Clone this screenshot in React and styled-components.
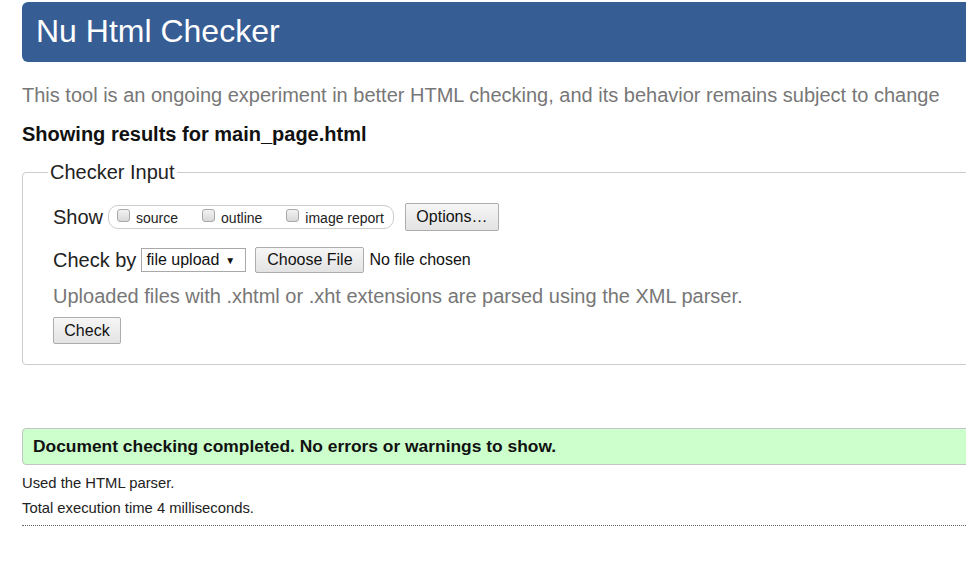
import React from "react";
import styled, { createGlobalStyle } from "styled-components";

const GlobalStyle = createGlobalStyle`
  html, body {
    margin: 0;
    padding: 0;
    background: #fff;
    overflow: hidden;
  }
  body {
    font-family: "Liberation Sans", Arial, sans-serif;
    color: #111;
  }
`;

const App = () => {
  return (
    <Page>
      <GlobalStyle />
      <Header>
        <h1>Nu Html Checker</h1>
      </Header>
      <Lead>
        This tool is an ongoing experiment in better HTML checking, and its
        behavior remains subject to change
      </Lead>
      <Results>Showing results for main_page.html</Results>

      <InputSet>
        <legend>Checker Input</legend>
        <Row>
          <RowLabel>Show</RowLabel>
          <ShowGroup>
            <CheckItem>
              <Box type="checkbox" />
              source
            </CheckItem>
            <CheckItem>
              <Box type="checkbox" />
              outline
            </CheckItem>
            <CheckItem>
              <Box type="checkbox" />
              image report
            </CheckItem>
          </ShowGroup>
          <Button $w={94} $h={28}>Options…</Button>
        </Row>
        <Row $mt={15}>
          <RowLabel>Check by</RowLabel>
          <Select>
            file upload <span className="arrow">▼</span>
          </Select>
          <Button $w={109} $h={26}>Choose File</Button>
          <FileName>No file chosen</FileName>
        </Row>
        <Hint>
          Uploaded files with .xhtml or .xht extensions are parsed using the XML
          parser.
        </Hint>
        <Button $w={68} $h={27}>Check</Button>
      </InputSet>

      <Success>Document checking completed. No errors or warnings to show.</Success>
      <Note $mt={8}>Used the HTML parser.</Note>
      <Note $mt={5}>Total execution time 4 milliseconds.</Note>
      <Rule />
    </Page>
  );
};
export default App;

const Page = styled.main`
  width: 1010px;
  padding: 2px 0 0 22px;
`;

const Header = styled.header`
  height: 60px;
  background: #375d95;
  border-radius: 6px;
  display: flex;
  align-items: center;

  h1 {
    margin: 0 0 0 14px;
    color: #fff;
    font-size: 32px;
    font-weight: normal;
    line-height: 1;
    padding-bottom: 2px;
  }
`;

const Lead = styled.p`
  margin: 21px 0 0;
  font-size: 20px;
  line-height: 24px;
  color: #777;
  white-space: nowrap;
`;

const Results = styled.h2`
  margin: 15px 0 0;
  font-size: 20px;
  line-height: 24px;
  font-weight: bold;
  color: #111;
`;

const InputSet = styled.fieldset`
  margin: 14px 0 0;
  padding: 0 0 20px 30px;
  border: 1px solid #ccc;
  border-radius: 4px;

  legend {
    margin-left: -5px;
    padding: 0 2px;
    font-size: 20px;
    line-height: 24px;
    color: #222;
  }
`;

const Row = styled.div`
  display: flex;
  align-items: center;
  height: 28px;
  margin-top: ${props => (props.$mt ? props.$mt : 19)}px;
`;

const RowLabel = styled.span`
  font-size: 20px;
  color: #222;
  margin-right: 5px;
`;

const ShowGroup = styled.div`
  display: flex;
  align-items: center;
  height: 22px;
  padding: 0 9px 0 7px;
  border: 1px solid #ccc;
  border-radius: 10px;
  margin-right: 11px;
`;

const CheckItem = styled.label`
  display: flex;
  align-items: center;
  font-size: 14px;
  color: #222;
  padding-top: 1px;

  & + & {
    margin-left: 23px;
  }
`;

const Box = styled.input`
  appearance: none;
  width: 13px;
  height: 13px;
  margin: -5px 6px 0 1px;
  border: 1px solid #a8a8a8;
  border-radius: 3px;
  background: linear-gradient(#f2f2f2, #d8d8d8);
`;

const Button = styled.button`
  box-sizing: border-box;
  width: ${props => props.$w}px;
  height: ${props => props.$h}px;
  padding: 0;
  font-family: "Liberation Sans", Arial, sans-serif;
  font-size: 16px;
  color: #111;
  background: linear-gradient(#f6f6f6, #e3e3e3);
  border: 1px solid #adadad;
  border-radius: 2px;
`;

const Select = styled.div`
  box-sizing: border-box;
  display: flex;
  align-items: center;
  height: 24px;
  width: 105px;
  padding: 0 0 0 4px;
  margin-right: 9px;
  font-size: 16px;
  color: #111;
  border: 1px solid #a9a9a9;
  background: #fff;

  .arrow {
    font-size: 10px;
    margin-left: 6px;
  }
`;

const FileName = styled.span`
  margin-left: 5px;
  font-size: 16px;
  color: #111;
`;

const Hint = styled.p`
  margin: 11px 0 10px;
  font-size: 20px;
  line-height: 22px;
  color: #777;
`;

const Success = styled.div`
  box-sizing: border-box;
  margin-top: 63px;
  height: 37px;
  display: flex;
  align-items: center;
  padding-left: 10px;
  background: #ccffcc;
  border: 1px solid #c4c4c4;
  border-radius: 4px;
  font-size: 17.4px;
  font-weight: bold;
  color: #111;
`;

const Note = styled.p`
  margin: ${props => props.$mt}px 0 0;
  font-size: 14.8px;
  line-height: 20px;
  color: #222;
`;

const Rule = styled.hr`
  margin: 7px 0 0;
  border: 0;
  border-top: 1px dotted #666;
`;
